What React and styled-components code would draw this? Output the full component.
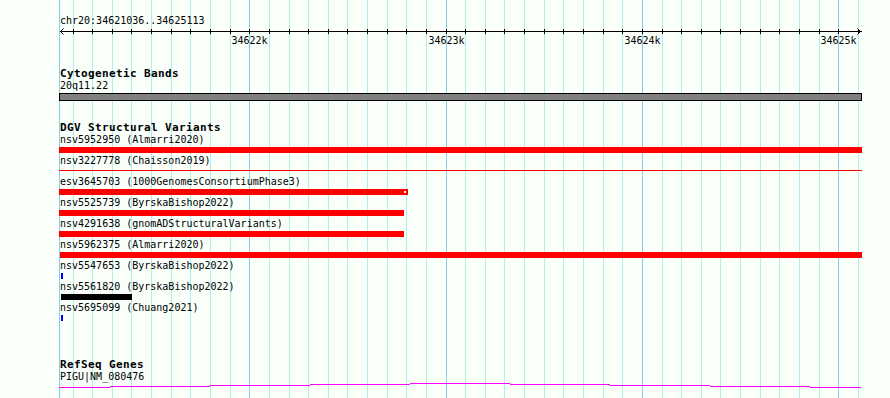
import React from 'react'
import styled, { createGlobalStyle } from 'styled-components'

// genomic window shown in the panel
const START = 34621036
const END = 34625113
const PX_PER_BP = 589 / 3000
const PANEL_LEFT = 59
const PANEL_WIDTH = 803

// panel-local x for a base position
const toX = bp => 1 + (bp - START) * PX_PER_BP

const gridStops = []
for (let bp = 34621100; bp <= END; bp += 100) gridStops.push(bp)
const majorStops = gridStops.filter(bp => bp % 1000 === 0)

// page x coordinates, as measured
const variants = [
  { name: 'nsv5952950 (Almarri2020)', from: 59, to: 862, color: '#ff0000' },
  { name: 'nsv3227778 (Chaisson2019)', from: 59, to: 862, color: '#ff0000', thin: true },
  { name: 'esv3645703 (1000GenomesConsortiumPhase3)', from: 59, to: 408, color: '#ff0000', notch: true },
  { name: 'nsv5525739 (ByrskaBishop2022)', from: 59, to: 404, color: '#ff0000' },
  { name: 'nsv4291638 (gnomADStructuralVariants)', from: 59, to: 404, color: '#ff0000' },
  { name: 'nsv5962375 (Almarri2020)', from: 60, to: 862, color: '#ff0000' },
  { name: 'nsv5547653 (ByrskaBishop2022)', from: 61, to: 63, color: '#0000ff' },
  { name: 'nsv5561820 (ByrskaBishop2022)', from: 61, to: 132, color: '#000000' },
  { name: 'nsv5695099 (Chuang2021)', from: 61, to: 63, color: '#0000ff' }
]

// the transcript line bows up a pixel every 100px
const geneSteps = [
  [59, 110, 4], [110, 210, 3], [210, 310, 2], [310, 410, 1], [410, 510, 0],
  [510, 610, 1], [610, 710, 2], [710, 810, 3], [810, 861, 4]
]

const BG = '#fafffa'

const GlobalStyle = createGlobalStyle`
  html, body {
    margin: 0;
    padding: 0;
    background: ${BG};
  }
`

const App = () => {
  return (
    <Page>
      <GlobalStyle />
      <Panel>
        <GridLayer width={PANEL_WIDTH} height='100%'>
          <rect x={0} y={0} width={1} height='100%' fill='#87ceeb' />
          {gridStops.map(bp => (
            <rect
              key={bp}
              x={Math.round(toX(bp))}
              y={0}
              width={1}
              height='100%'
              fill={bp % 1000 === 0 ? '#87ceeb' : '#afeeee'}
            />
          ))}
        </GridLayer>

        <Tracks>
          <Ruler>
            <Label>chr20:34621036..34625113</Label>
            <svg width={PANEL_WIDTH} height={20}>
              <rect x={1} y={4} width={802} height={1} fill='#000' />
              <path d='M1.5 4.5 L4.5 1.5 M1.5 4.5 L4.5 7.5' stroke='#000' fill='none' />
              <path d='M801.5 4.5 L798.5 1.5 M801.5 4.5 L798.5 7.5' stroke='#000' fill='none' />
              {gridStops.map(bp => (
                <rect key={bp} x={Math.round(toX(bp))} y={2} width={1} height={5} fill='#000' />
              ))}
              {majorStops.map(bp => (
                <TickLabel key={bp} x={Math.round(toX(bp)) + 0.5} y={16.5} textAnchor='middle'>
                  {bp / 1000}k
                </TickLabel>
              ))}
            </svg>
          </Ruler>

          <Track $top={21}>
            <TrackTitle>Cytogenetic Bands</TrackTitle>
            <Label>20q11.22</Label>
            <Band />
          </Track>

          <Track $top={21}>
            <TrackTitle>DGV Structural Variants</TrackTitle>
            {variants.map(v => (
              <FeatureRow key={v.name}>
                <Label>{v.name}</Label>
                <Lane>
                  <Bar
                    $color={v.color}
                    $thin={v.thin}
                    style={{ marginLeft: v.from - PANEL_LEFT, width: v.to - v.from }}
                  >
                    {v.notch && <Notch />}
                  </Bar>
                </Lane>
              </FeatureRow>
            ))}
          </Track>

          <Track $top={36}>
            <TrackTitle>RefSeq Genes</TrackTitle>
            <Label>PIGU|NM_080476</Label>
            <svg width={PANEL_WIDTH} height={6}>
              {geneSteps.map(([a, b, y]) => (
                <rect key={a} x={a - PANEL_LEFT} y={y} width={b - a} height={1} fill='#ff00ff' />
              ))}
            </svg>
          </Track>
        </Tracks>
      </Panel>
    </Page>
  )
}

const Page = styled.div`
  min-height: 100vh;
  padding-left: ${PANEL_LEFT}px;
  background: ${BG};
  color: #000;
`
const Panel = styled.div`
  position: relative;
  width: ${PANEL_WIDTH}px;
  min-height: 398px;
`
const GridLayer = styled.svg`
  position: absolute;
  top: 0;
  left: 0;
  z-index: 0;
  pointer-events: none;
`
const Tracks = styled.div`
  position: relative;
  z-index: 1;
  display: flex;
  flex-direction: column;
  svg {
    display: block;
  }
`
const Ruler = styled.div`
  padding-top: 15px;
`
const TickLabel = styled.text`
  font-family: 'DejaVu Sans Mono', monospace;
  font-size: 10px;
  fill: #000;
`
const Label = styled.div`
  font-family: 'DejaVu Sans Mono', 'Liberation Mono', monospace;
  font-size: 10px;
  line-height: 12px;
  height: 12px;
  white-space: pre;
  padding-left: 1px;
`
const TrackTitle = styled.div`
  font-family: 'DejaVu Sans Mono', 'Liberation Mono', monospace;
  font-weight: bold;
  font-size: 11px;
  letter-spacing: 0.38px;
  line-height: 12px;
  height: 12px;
  white-space: pre;
  padding-left: 1px;
`
const Track = styled.section`
  margin-top: ${p => p.$top}px;
`
const Band = styled.div`
  box-sizing: border-box;
  margin-top: 1px;
  height: 8px;
  background: #808080;
  border: 1px solid #000;
`
const FeatureRow = styled.div`
  height: 21px;
`
const Lane = styled.div`
  display: flex;
  align-items: flex-start;
  height: 6px;
  margin-top: 1px;
`
const Bar = styled.div`
  position: relative;
  flex: none;
  height: ${p => (p.$thin ? 1 : 6)}px;
  margin-top: ${p => (p.$thin ? 2 : 0)}px;
  background: ${p => p.$color};
`
const Notch = styled.span`
  position: absolute;
  right: 2px;
  top: 2px;
  width: 2px;
  height: 2px;
  background: ${BG};
`

export default App
